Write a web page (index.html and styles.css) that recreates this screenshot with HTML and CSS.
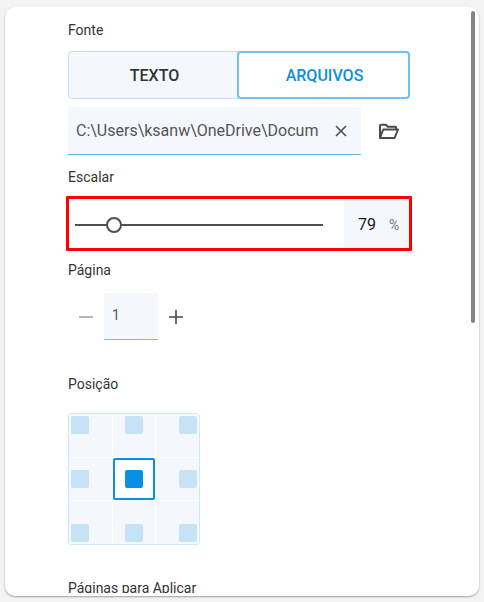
FILE: index.html
```html
<!DOCTYPE html>
<html lang="pt">
<head>
    <meta charset="UTF-8">
    <meta name="viewport" content="width=device-width, initial-scale=1.0">
    <title>Fonte</title>
    <link rel="stylesheet" href="styles.css">
</head>
<body>
    <div class="card">
        <div class="scrollbar"></div>
        <div class="content">
            <div class="label label-fonte">Fonte</div>
            <div class="tabs">
                <div class="tab">TEXTO</div>
                <div class="tab tab-active">ARQUIVOS</div>
            </div>

            <div class="file-row">
                <div class="file-field">
                    <span class="file-path">C:\Users\ksanw\OneDrive\Docum</span>
                    <svg class="icon-clear" width="12" height="12" viewBox="0 0 12 12"><path d="M1 1l10 10M11 1L1 11" stroke="#4a4a4a" stroke-width="1.5" fill="none"/></svg>
                </div>
                <svg class="icon-folder" width="22" height="18" viewBox="0 0 22 18"><path d="M2 16V3.7q0-.9.9-.9h5l2 2h7.3q.9 0 .9.9v1.6M2 16h14.6L20 7.5H5.2Z" stroke="#4a4a4a" stroke-width="2" stroke-linejoin="round" fill="none"/></svg>
            </div>

            <div class="label label-escalar">Escalar</div>
            <div class="scale-box">
                <div class="slider"><div class="thumb"></div></div>
                <div class="scale-value">
                    <span class="scale-num">79</span>
                    <span class="scale-unit">%</span>
                </div>
            </div>

            <div class="label label-pagina">Página</div>
            <div class="stepper">
                <svg width="14" height="14" viewBox="0 0 14 14"><path d="M0 7h14" stroke="#a6a6a6" stroke-width="1.6"/></svg>
                <div class="page-input">1</div>
                <svg width="14" height="14" viewBox="0 0 14 14"><path d="M0 7h14M7 0v14" stroke="#4a4a4a" stroke-width="1.6"/></svg>
            </div>

            <div class="label label-posicao">Posição</div>
            <div class="pos-grid">
                <div class="pos-cell pos-tl"><i></i></div>
                <div class="pos-cell pos-tc"><i></i></div>
                <div class="pos-cell pos-tr"><i></i></div>
                <div class="pos-cell pos-ml"><i></i></div>
                <div class="pos-cell pos-mc pos-selected"><i></i></div>
                <div class="pos-cell pos-mr"><i></i></div>
                <div class="pos-cell pos-bl"><i></i></div>
                <div class="pos-cell pos-bc"><i></i></div>
                <div class="pos-cell pos-br"><i></i></div>
            </div>

            <div class="label label-aplicar">Páginas para Aplicar</div>
        </div>
    </div>
</body>
</html>
```

FILE: styles.css
```css
html, body {
    height: 100%;
}

body {
    margin: 0;
    padding: 7px 5px 6px;
    box-sizing: border-box;
    background-color: #f3f3f3;
    font-family: Roboto, "Liberation Sans", sans-serif;
    color: #333;
    overflow: hidden;
}

.card {
    position: relative;
    height: 100%;
    background-color: #fff;
    border-radius: 10px;
    box-shadow: 0 1px 2px rgba(0, 0, 0, 0.35);
    overflow: hidden;
}

.scrollbar {
    position: absolute;
    top: 4px;
    left: 466px;
    width: 4px;
    height: 312px;
    border-radius: 2px;
    background-color: #858585;
}

.content {
    box-sizing: border-box;
    width: 346px;
    height: 586px;
    margin-left: 61px;
    padding: 0 2px;
    overflow: hidden;
}

.label {
    font-size: 14px;
    line-height: 16px;
}

.label-fonte { padding-top: 15px; }
.label-escalar { margin-top: 14px; }
.label-pagina { margin-top: 11px; }
.label-posicao { margin-top: 36px; }
.label-aplicar { margin-top: 35px; }

.tabs {
    display: flex;
    height: 48px;
    margin-top: 13px;
}

.tab {
    flex: 1;
    display: flex;
    align-items: center;
    justify-content: center;
    box-sizing: border-box;
    padding-left: 2px;
    font-size: 16px;
    font-weight: 500;
    background-color: #f4f8fc;
    border: 1px solid #bfe0f6;
    border-radius: 4px 0 0 4px;
}

.tab-active {
    margin-left: -2px;
    background-color: #fff;
    color: #0b8fe2;
    border: 2px solid #74bfee;
    border-radius: 4px;
}

.file-row {
    display: flex;
    align-items: center;
    margin-top: 8px;
}

.file-field {
    display: flex;
    align-items: center;
    justify-content: space-between;
    box-sizing: border-box;
    width: 293px;
    height: 48px;
    padding: 0 14px 0 8px;
    background-color: #f4f8fc;
    border-bottom: 1px solid #62b5ea;
    font-size: 16px;
    color: #555;
}

.icon-folder {
    margin-left: 17px;
}

.scale-box {
    display: flex;
    align-items: center;
    justify-content: space-between;
    box-sizing: border-box;
    width: 346px;
    height: 55px;
    margin: 11px 0 0 -2px;
    padding-left: 6px;
    border: 3px solid #f00;
    border-radius: 1px;
}

.slider {
    position: relative;
    width: 248px;
    height: 2px;
    margin-top: 2px;
    background-color: #4f4f4f;
}

.thumb {
    position: absolute;
    top: -7px;
    left: 31px;
    box-sizing: border-box;
    width: 16px;
    height: 16px;
    border: 2px solid #4f4f4f;
    border-radius: 50%;
    background-color: #fff;
}

.scale-value {
    display: flex;
    align-items: center;
    box-sizing: border-box;
    width: 65px;
    height: 100%;
    padding: 2px 0 0 14px;
    background-color: #f4f8fc;
}

.scale-num {
    width: 31px;
    font-size: 16px;
    color: #1c1c1c;
}

.scale-unit {
    font-size: 14px;
    color: #777;
}

.stepper {
    display: flex;
    align-items: center;
    gap: 11px;
    margin: 15px 0 0 11px;
}

.page-input {
    box-sizing: border-box;
    width: 54px;
    height: 47px;
    padding: 14px 0 0 8px;
    background-color: #f4f8fc;
    border-bottom: 1px solid #7fb5de;
    font-size: 14px;
    color: #555;
}

.pos-grid {
    display: grid;
    grid-template-columns: repeat(3, 1fr);
    grid-template-rows: repeat(3, 1fr);
    gap: 1px;
    box-sizing: border-box;
    width: 132px;
    height: 132px;
    margin-top: 21px;
    border: 1px solid #cfe8f9;
    border-radius: 3px;
    background-color: #fff;
}

.pos-cell {
    display: flex;
    box-sizing: border-box;
    padding: 2px;
    background-color: #f4f8fc;
}

.pos-cell i {
    width: 18px;
    height: 18px;
    border-radius: 2px;
    background-color: #c5e2f7;
}

.pos-tc, .pos-mc, .pos-bc { justify-content: center; }
.pos-tr, .pos-mr, .pos-br { justify-content: flex-end; }
.pos-ml, .pos-mc, .pos-mr { align-items: center; }
.pos-bl, .pos-bc, .pos-br { align-items: flex-end; }

.pos-selected {
    background-color: #fff;
    border: 2px solid #0b8fe2;
    border-radius: 2px;
}

.pos-selected i {
    background-color: #0b8fe2;
}
```
